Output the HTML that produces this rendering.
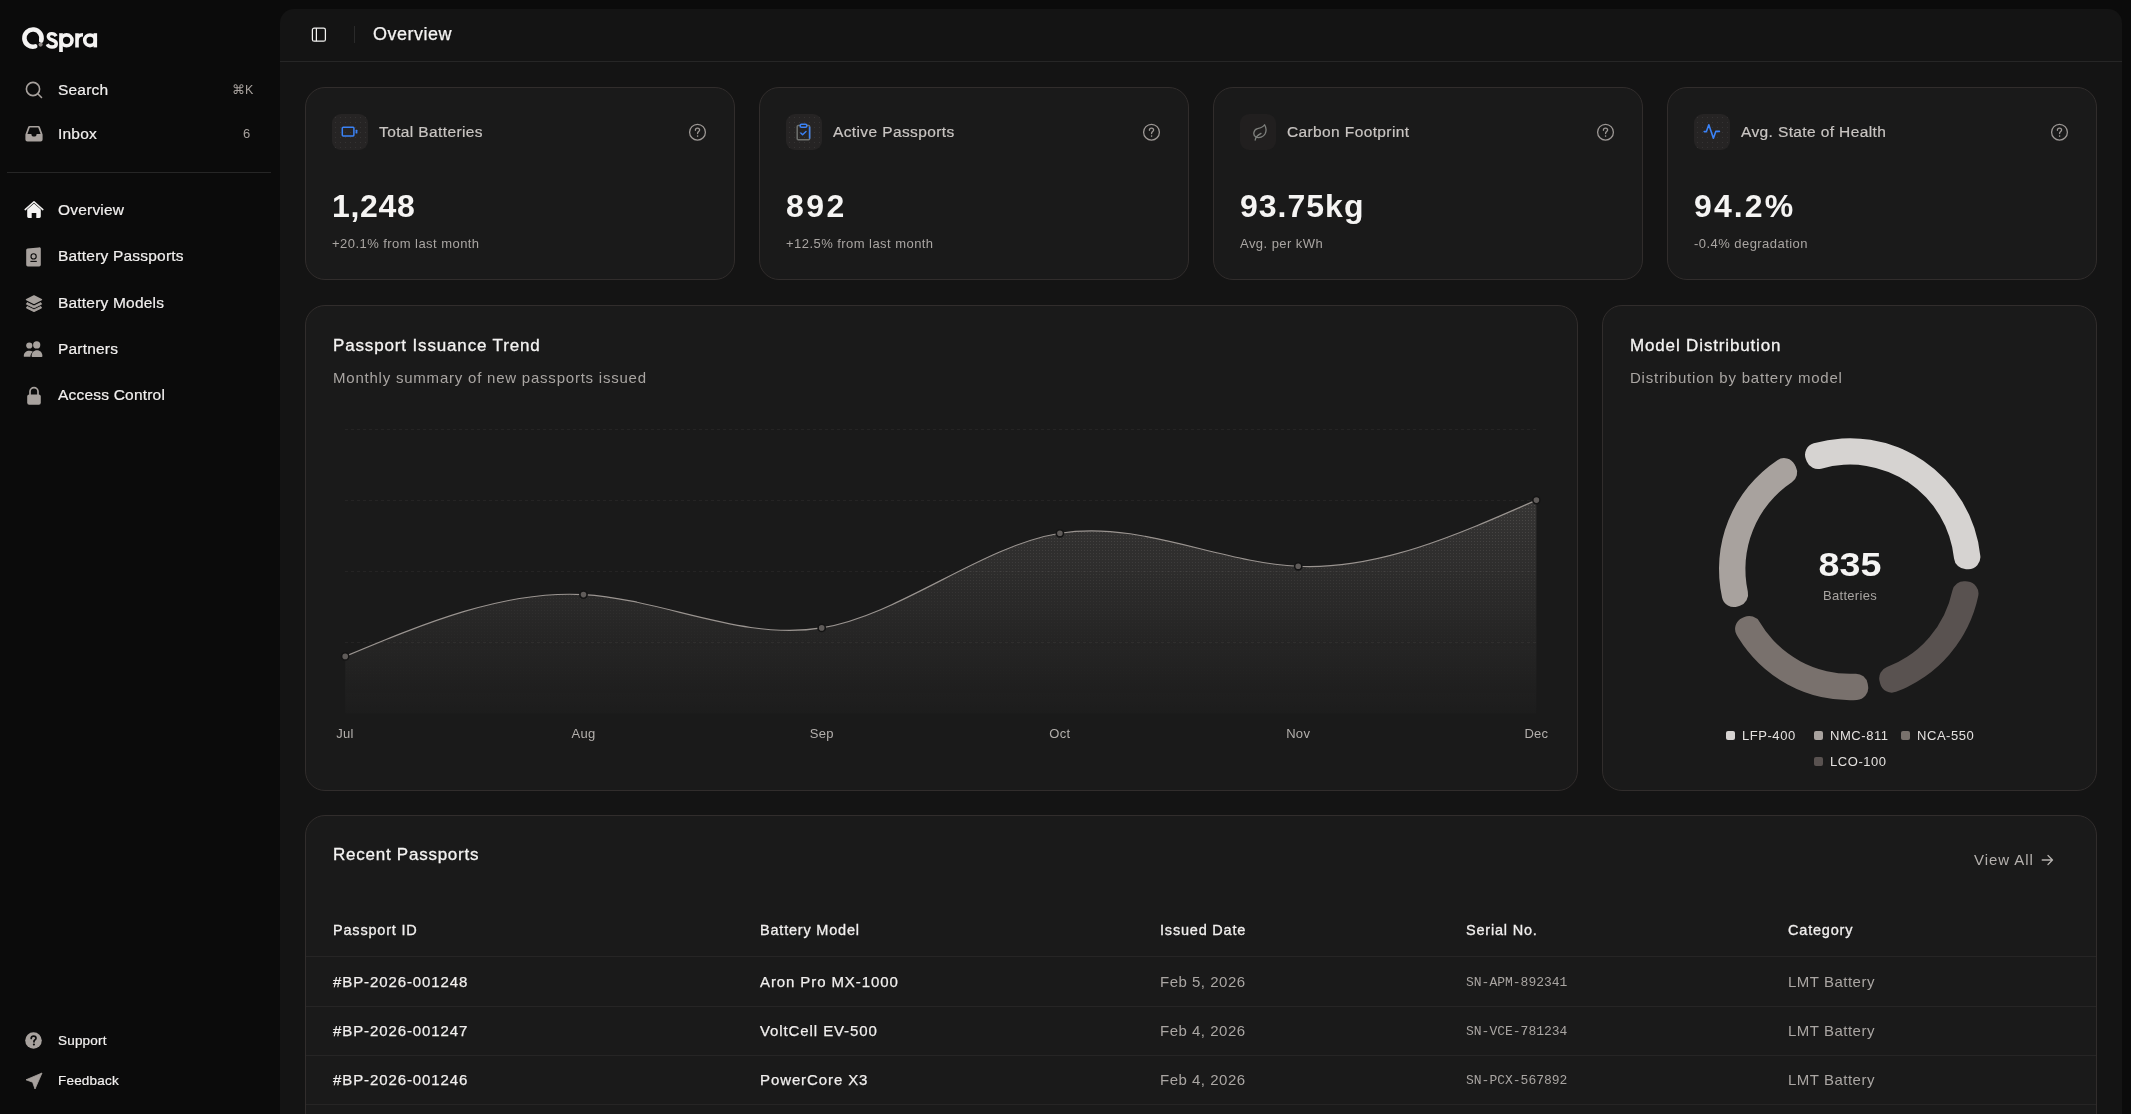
<!DOCTYPE html>
<html><head><meta charset="utf-8">
<style>
*{box-sizing:border-box;margin:0;padding:0}
html,body{width:2131px;height:1114px;overflow:hidden;background:#0b0b0b;font-family:"Liberation Sans",sans-serif;color:#f4f3f2}
.abs{position:absolute;white-space:nowrap}
#side{position:absolute;left:0;top:0;width:280px;height:1114px;background:#0b0b0b;will-change:transform}
.nav{position:absolute;left:0;width:280px;height:40px}
.nav .lbl{position:absolute;left:58px;font-size:15.5px;color:#f2f0ef;white-space:nowrap;letter-spacing:0.2px;-webkit-text-stroke:0.2px #f2f0ef}
.nav svg{position:absolute}
#main{position:absolute;left:280px;top:9px;width:1842px;height:1200px;background:#141414;border-radius:14px;will-change:transform}
#hdr{position:absolute;left:0;top:0;width:1842px;height:53px;border-bottom:1px solid #262626}
.card{position:absolute;background:#1a1a1a;border:1px solid #312d2c;border-radius:20px}
.stat .ibox{position:absolute;left:26px;top:26px;width:36px;height:36px;border-radius:9px;background:radial-gradient(circle,rgba(255,255,255,0.07) 0.7px,transparent 0.9px) 1px 1px/5px 5px,#262424}
.stat .ttl{position:absolute;left:73px;top:35px;font-size:15.5px;color:#c9c5c2;white-space:nowrap;letter-spacing:0.38px;-webkit-text-stroke:0.2px #c9c5c2}
.stat .val{position:absolute;left:26px;top:100px;font-size:32px;font-weight:bold;color:#f5f4f3;white-space:nowrap;letter-spacing:0.7px}
.stat .sub{position:absolute;left:26px;top:148px;font-size:13px;color:#a9a5a2;white-space:nowrap;letter-spacing:0.45px}
.stat .help{position:absolute;right:27.5px;top:35px}
.ctitle{font-size:17px;color:#f4f3f2;white-space:nowrap;letter-spacing:0.85px;-webkit-text-stroke:0.3px #f4f3f2}
.csub{font-size:15px;color:#a9a5a2;white-space:nowrap;letter-spacing:0.78px}
.xl{top:726px;width:80px;margin-left:-40px;text-align:center;font-size:13px;color:#b3afac;letter-spacing:0.3px}
.lg{font-size:13px;color:#e4e1df;white-space:nowrap;letter-spacing:0.55px;padding-left:16px;line-height:10px;height:10px}
.lg i{position:absolute;left:0;top:0;width:9px;height:9px;border-radius:2px}
.th{top:106px;font-size:14.5px;color:#f1efee;white-space:nowrap;letter-spacing:0.8px;-webkit-text-stroke:0.3px #f1efee}
.td1{font-size:15px;color:#f1efee;white-space:nowrap;letter-spacing:0.9px;-webkit-text-stroke:0.25px #f1efee}
.td2{font-size:15px;color:#aaa6a3;white-space:nowrap;letter-spacing:0.5px}
.td3{font-size:13px;font-family:"Liberation Mono",monospace;color:#a9a5a2;white-space:nowrap}
</style></head>
<body>
<div id="side">
  <svg class="abs" style="left:0;top:0" width="110" height="60" viewBox="0 0 110 60">
    <path d="M41.2 40.6 A8.6 8.6 0 1 0 35.2 46.4" fill="none" stroke="#f4f3f2" stroke-width="4.6" stroke-linecap="round"/>
    <circle cx="40.6" cy="44.6" r="2.1" fill="#8a8482"/>
    <path d="M56.2 36.2 C55.2 34.4 53.6 33.6 51.8 33.6 C49.4 33.6 48.3 34.9 48.3 36.6 C48.3 38.6 50.3 39.4 52.3 40 C54.6 40.7 56.3 41.5 56.3 43.7 C56.3 45.8 54.4 47 52 47 C49.9 47 48.1 46 47.2 44.2" fill="none" stroke="#f4f3f2" stroke-width="3.4"/>
    <circle cx="66.6" cy="40.3" r="5.4" fill="none" stroke="#f4f3f2" stroke-width="3.6"/>
    <path d="M61 33.2 V52" stroke="#f4f3f2" stroke-width="3.7"/>
    <path d="M77 33.2 V47.4 M77 40.5 C77 36.2 79.5 34.8 83 34.8" fill="none" stroke="#f4f3f2" stroke-width="3.6"/>
    <circle cx="90" cy="40.3" r="5.3" fill="none" stroke="#f4f3f2" stroke-width="3.6"/>
    <path d="M95.3 33.2 V47.4" stroke="#f4f3f2" stroke-width="3.6"/>
  </svg>
  <div class="nav" style="top:69px"><svg style="left:25px;top:12px" width="18" height="18" viewBox="0 0 18 18"><circle cx="8" cy="8" r="6.6" fill="none" stroke="#a8a29e" stroke-width="1.6"/><path d="M12.8 12.8 L16.5 16.5" stroke="#a8a29e" stroke-width="1.6" stroke-linecap="round"/></svg><div class="lbl" style="top:12px">Search</div><div class="abs" style="left:232px;top:13px;font-size:12.5px;color:#a8a29e">&#8984;K</div></div>
  <div class="nav" style="top:113px"><svg style="left:24px;top:12px" width="20" height="18" viewBox="0 0 20 18"><path d="M4.2 1.8 A1.6 1.6 0 0 1 5.6 1 H14.4 A1.6 1.6 0 0 1 15.8 1.8 L18.6 9.4 V14.6 A2 2 0 0 1 16.6 16.6 H3.4 A2 2 0 0 1 1.4 14.6 V9.4 Z" fill="#a8a29e"/><path d="M5.8 2.5 H14.2 L16.6 9 H12.6 A2.6 2.6 0 0 1 7.4 9 H3.4 Z" fill="#0b0b0b"/></svg><div class="lbl" style="top:12px">Inbox</div><div class="abs" style="left:243px;top:13px;font-size:13px;color:#a8a29e">6</div></div>
  <div class="abs" style="left:7px;top:172px;width:264px;height:1px;background:#262626"></div>
  <div class="nav" style="top:190px"><svg style="left:24px;top:11px" width="20" height="18" viewBox="0 0 20 18"><path d="M1.2 8.6 L10 0.8 L18.8 8.6" fill="none" stroke="#f4f3f2" stroke-width="1.5" stroke-linecap="round" stroke-linejoin="round"/><path d="M3.2 8.4 L10 2.6 L16.8 8.4 V15.6 A1.4 1.4 0 0 1 15.4 17 H12.3 V12 H7.7 V17 H4.6 A1.4 1.4 0 0 1 3.2 15.6 Z" fill="#f4f3f2"/></svg><div class="lbl" style="top:11px">Overview</div></div>
  <div class="nav" style="top:236px"><svg style="left:25px;top:11px" width="17" height="20" viewBox="0 0 17 20"><path d="M2.6 1.4 L13.6 0.4 A1.6 1.6 0 0 1 15.8 2 V17.8 A1.6 1.6 0 0 1 14.2 19.4 H2.8 A1.6 1.6 0 0 1 1.2 17.8 V3 A1.6 1.6 0 0 1 2.6 1.4 Z" fill="#a8a29e"/><circle cx="8.6" cy="9.4" r="2.6" fill="none" stroke="#0b0b0b" stroke-width="1.1"/><path d="M5.4 14.4 H11.8" stroke="#0b0b0b" stroke-width="1.1"/></svg><div class="lbl" style="top:11px">Battery Passports</div></div>
  <div class="nav" style="top:283px"><svg style="left:25px;top:12px" width="18" height="18" viewBox="0 0 18 18"><path d="M9 1 L16.4 4.6 L9 8.2 L1.6 4.6 Z" fill="#a8a29e" stroke="#a8a29e" stroke-width="1.6" stroke-linejoin="round"/><path d="M2.2 7.6 L9 10.9 L15.8 7.6 L16.6 9.2 L9 12.9 L1.4 9.2 Z" fill="#a8a29e" stroke="#a8a29e" stroke-width="0.8" stroke-linejoin="round"/><path d="M2.2 11.4 L9 14.7 L15.8 11.4 L16.6 13 L9 16.7 L1.4 13 Z" fill="#a8a29e" stroke="#a8a29e" stroke-width="0.8" stroke-linejoin="round"/></svg><div class="lbl" style="top:11px">Battery Models</div></div>
  <div class="nav" style="top:329px"><svg style="left:23px;top:12px" width="22" height="18" viewBox="0 0 22 18"><circle cx="6.3" cy="4.5" r="3.1" fill="#a8a29e"/><circle cx="13.7" cy="3.9" r="3.6" fill="#a8a29e"/><path d="M0.8 15.2 C0.8 11.6 3.2 9.7 6.4 9.7 C7.8 9.7 9 10.1 9.9 10.8 C8.4 12 7.4 13.6 7.4 15.8 H1.4 A0.6 0.6 0 0 1 0.8 15.2 Z" fill="#a8a29e"/><path d="M8.6 15.2 C8.6 11.6 10.8 9.3 14 9.3 C17.2 9.3 19.4 11.6 19.4 15.2 A0.8 0.8 0 0 1 18.6 16 H9.4 A0.8 0.8 0 0 1 8.6 15.2 Z" fill="#a8a29e"/></svg><div class="lbl" style="top:11px">Partners</div></div>
  <div class="nav" style="top:375px"><svg style="left:26px;top:11px" width="16" height="20" viewBox="0 0 16 20"><path d="M4 9 V5.6 A4 4 0 0 1 12 5.6 V9" fill="none" stroke="#a8a29e" stroke-width="1.7"/><rect x="1.2" y="8.6" width="13.6" height="10.2" rx="2" fill="#a8a29e"/></svg><div class="lbl" style="top:11px">Access Control</div></div>
  <div class="nav" style="top:1020px"><svg style="left:25px;top:12px" width="17" height="17" viewBox="0 0 17 17"><circle cx="8.5" cy="8.5" r="8.3" fill="#a8a29e"/><path d="M6.2 6.4 C6.2 5 7.2 4.1 8.6 4.1 C10 4.1 11 5 11 6.2 C11 7.6 9.4 8 9 9 V9.8" fill="none" stroke="#0b0b0b" stroke-width="1.7" stroke-linecap="round"/><circle cx="8.9" cy="12.5" r="1.1" fill="#0b0b0b"/></svg><div class="lbl" style="top:13px;font-size:13.5px">Support</div></div>
  <div class="nav" style="top:1060px"><svg style="left:25px;top:12px" width="18" height="18" viewBox="0 0 18 18"><path d="M17 1 L1 7.8 L7.6 10.2 L10 17 Z" fill="#a8a29e" stroke="#a8a29e" stroke-width="0.8" stroke-linejoin="round"/></svg><div class="lbl" style="top:13px;font-size:13.5px">Feedback</div></div>
</div>
<div id="main">
  <div id="hdr">
    <svg class="abs" style="left:31px;top:18px" width="16" height="16" viewBox="0 0 16 16"><rect x="1.4" y="1.2" width="13" height="13" rx="1.8" fill="none" stroke="#f4f3f2" stroke-width="1.25"/><path d="M5.4 1.2 V14.2" stroke="#f4f3f2" stroke-width="1.25"/></svg>
    <div class="abs" style="left:74px;top:17px;width:1px;height:17px;background:#2a2a2a"></div>
    <div class="abs" style="left:93px;top:15px;font-size:18px;color:#f4f3f2;letter-spacing:0.5px;-webkit-text-stroke:0.25px #f4f3f2">Overview</div>
  </div>
  <div class="card stat" style="left:25px;top:78px;width:430px;height:193px">
    <div class="ibox" style=""><svg class="abs" style="left:9px;top:12px" width="18" height="12" viewBox="0 0 18 12"><rect x="1.3" y="1.3" width="11.6" height="8.6" rx="0.8" fill="none" stroke="#3b82f6" stroke-width="1.5"/><rect x="14.6" y="3.8" width="1.8" height="3.6" rx="0.5" fill="#3b82f6"/></svg></div><div class="ttl">Total Batteries</div><svg class="help" width="19" height="19" viewBox="0 0 19 19"><circle cx="9.5" cy="9.2" r="7.9" fill="none" stroke="#9c9794" stroke-width="1.3"/><path d="M7.4 7.3 C7.4 6 8.3 5.2 9.5 5.2 C10.7 5.2 11.6 6 11.6 7.1 C11.6 8.5 9.6 8.7 9.6 10.3 V10.6" fill="none" stroke="#9c9794" stroke-width="1.3" stroke-linecap="round"/><circle cx="9.6" cy="13.1" r="0.8" fill="#9c9794"/></svg>
    <div class="val" style="letter-spacing:0.7px">1,248</div><div class="sub">+20.1% from last month</div>
  </div>
  <div class="card stat" style="left:479px;top:78px;width:430px;height:193px">
    <div class="ibox" style=""><svg class="abs" style="left:10px;top:9px" width="16" height="18" viewBox="0 0 16 18"><path d="M4 2.6 H2.2 A1 1 0 0 0 1.2 3.6 V15.8 A1 1 0 0 0 2.2 16.8 H12.6 A1 1 0 0 0 13.6 15.8 V3.6 A1 1 0 0 0 12.6 2.6 H11" fill="none" stroke="#6f716e" stroke-width="1.5"/><path d="M13.6 3.8 V15.6" stroke="#3b82f6" stroke-width="1.5"/><rect x="4.2" y="1.2" width="6.6" height="3" rx="1.2" fill="none" stroke="#3b82f6" stroke-width="1.5"/><path d="M4.8 10 L6.6 11.8 L10 8.6" fill="none" stroke="#3b82f6" stroke-width="1.4" stroke-linecap="round" stroke-linejoin="round"/></svg></div><div class="ttl">Active Passports</div><svg class="help" width="19" height="19" viewBox="0 0 19 19"><circle cx="9.5" cy="9.2" r="7.9" fill="none" stroke="#9c9794" stroke-width="1.3"/><path d="M7.4 7.3 C7.4 6 8.3 5.2 9.5 5.2 C10.7 5.2 11.6 6 11.6 7.1 C11.6 8.5 9.6 8.7 9.6 10.3 V10.6" fill="none" stroke="#9c9794" stroke-width="1.3" stroke-linecap="round"/><circle cx="9.6" cy="13.1" r="0.8" fill="#9c9794"/></svg>
    <div class="val" style="letter-spacing:2.5px">892</div><div class="sub">+12.5% from last month</div>
  </div>
  <div class="card stat" style="left:933px;top:78px;width:430px;height:193px">
    <div class="ibox" style="background:#211f1f"><svg class="abs" style="left:10px;top:9px" width="18" height="18" viewBox="0 0 18 18"><path d="M6 14 C2.6 12.6 3.2 6.6 7.6 5.6 C10 5 13 4.6 14.6 1.8 C16.2 4.6 16.4 8.4 15 11 C13.4 13.8 9.4 15.4 6 14 Z" fill="none" stroke="#7e807d" stroke-width="1.3" stroke-linejoin="round"/><path d="M5.2 17 C5.6 14 8 12 11 10.4" fill="none" stroke="#7e807d" stroke-width="1.3" stroke-linecap="round"/></svg></div><div class="ttl">Carbon Footprint</div><svg class="help" width="19" height="19" viewBox="0 0 19 19"><circle cx="9.5" cy="9.2" r="7.9" fill="none" stroke="#9c9794" stroke-width="1.3"/><path d="M7.4 7.3 C7.4 6 8.3 5.2 9.5 5.2 C10.7 5.2 11.6 6 11.6 7.1 C11.6 8.5 9.6 8.7 9.6 10.3 V10.6" fill="none" stroke="#9c9794" stroke-width="1.3" stroke-linecap="round"/><circle cx="9.6" cy="13.1" r="0.8" fill="#9c9794"/></svg>
    <div class="val" style="letter-spacing:1.0px">93.75kg</div><div class="sub">Avg. per kWh</div>
  </div>
  <div class="card stat" style="left:1387px;top:78px;width:430px;height:193px">
    <div class="ibox" style=""><svg class="abs" style="left:9px;top:9px" width="18" height="18" viewBox="0 0 18 18"><path d="M1.2 8.6 H3.4 L5.8 1.8 L10.4 15.2 L12.8 8.4 H16.4" fill="none" stroke="#3b82f6" stroke-width="1.6" stroke-linecap="round" stroke-linejoin="round"/></svg></div><div class="ttl">Avg. State of Health</div><svg class="help" width="19" height="19" viewBox="0 0 19 19"><circle cx="9.5" cy="9.2" r="7.9" fill="none" stroke="#9c9794" stroke-width="1.3"/><path d="M7.4 7.3 C7.4 6 8.3 5.2 9.5 5.2 C10.7 5.2 11.6 6 11.6 7.1 C11.6 8.5 9.6 8.7 9.6 10.3 V10.6" fill="none" stroke="#9c9794" stroke-width="1.3" stroke-linecap="round"/><circle cx="9.6" cy="13.1" r="0.8" fill="#9c9794"/></svg>
    <div class="val" style="letter-spacing:2.1px">94.2%</div><div class="sub">-0.4% degradation</div>
  </div>
  <div class="card" style="left:25px;top:296px;width:1273px;height:486px">
    <div class="abs ctitle" style="left:27px;top:30px">Passport Issuance Trend</div>
    <div class="abs csub" style="left:27px;top:63px">Monthly summary of new passports issued</div>
  </div>
  <div class="card" style="left:1322px;top:296px;width:495px;height:486px">
    <div class="abs ctitle" style="left:27px;top:30px">Model Distribution</div>
    <div class="abs csub" style="left:27px;top:63px">Distribution by battery model</div>
  </div>
  <div class="card" style="left:25px;top:806px;width:1792px;height:400px">
    <div class="abs ctitle" style="left:27px;top:29px;letter-spacing:0.75px">Recent Passports</div>
    <div class="abs" style="left:1668px;top:35px;font-size:15px;color:#b5b1ae;letter-spacing:0.95px">View All</div>
    <svg class="abs" style="left:1735px;top:38px" width="13" height="12" viewBox="0 0 13 12"><path d="M1.2 6 H11.5 M7 1.5 L11.5 6 L7 10.5" fill="none" stroke="#b5b1ae" stroke-width="1.3" stroke-linecap="round" stroke-linejoin="round"/></svg>
    <div class="abs th" style="left:27px">Passport ID</div>
    <div class="abs th" style="left:454px">Battery Model</div>
    <div class="abs th" style="left:854px">Issued Date</div>
    <div class="abs th" style="left:1160px">Serial No.</div>
    <div class="abs th" style="left:1482px">Category</div>
    <div class="abs" style="left:0;top:140px;width:1790px;height:1px;background:#262525"></div>
    <div class="abs" style="left:0;top:190px;width:1790px;height:1px;background:#262525"></div>
    <div class="abs td1" style="left:27px;top:157px">#BP-2026-001248</div>
    <div class="abs td1" style="left:454px;top:157px">Aron Pro MX-1000</div>
    <div class="abs td2" style="left:854px;top:157px">Feb 5, 2026</div>
    <div class="abs td3" style="left:1160px;top:159px">SN-APM-892341</div>
    <div class="abs td2" style="left:1482px;top:157px">LMT Battery</div>
    <div class="abs" style="left:0;top:239px;width:1790px;height:1px;background:#262525"></div>
    <div class="abs td1" style="left:27px;top:206px">#BP-2026-001247</div>
    <div class="abs td1" style="left:454px;top:206px">VoltCell EV-500</div>
    <div class="abs td2" style="left:854px;top:206px">Feb 4, 2026</div>
    <div class="abs td3" style="left:1160px;top:208px">SN-VCE-781234</div>
    <div class="abs td2" style="left:1482px;top:206px">LMT Battery</div>
    <div class="abs" style="left:0;top:288px;width:1790px;height:1px;background:#262525"></div>
    <div class="abs td1" style="left:27px;top:255px">#BP-2026-001246</div>
    <div class="abs td1" style="left:454px;top:255px">PowerCore X3</div>
    <div class="abs td2" style="left:854px;top:255px">Feb 4, 2026</div>
    <div class="abs td3" style="left:1160px;top:257px">SN-PCX-567892</div>
    <div class="abs td2" style="left:1482px;top:255px">LMT Battery</div>
    <div class="abs" style="left:0;top:337px;width:1790px;height:1px;background:#262525"></div>
    <div class="abs td1" style="left:27px;top:304px">#BP-2026-001245</div>
    <div class="abs td1" style="left:454px;top:304px">Aron Pro MX-1000</div>
    <div class="abs td2" style="left:854px;top:304px">Feb 3, 2026</div>
    <div class="abs td3" style="left:1160px;top:306px">SN-APM-892340</div>
    <div class="abs td2" style="left:1482px;top:304px">LMT Battery</div>
  </div>
</div>
<svg class="abs" style="left:0;top:0;z-index:5;pointer-events:none" width="2131" height="1114" viewBox="0 0 2131 1114">
<defs><linearGradient id="ag" x1="0" y1="0" x2="0" y2="1"><stop offset="0" stop-color="#a8a29e" stop-opacity="0.2"/><stop offset="1" stop-color="#a8a29e" stop-opacity="0.02"/></linearGradient><linearGradient id="mg" x1="0" y1="0" x2="0" y2="1"><stop offset="0" stop-color="#fff" stop-opacity="1"/><stop offset="0.6" stop-color="#fff" stop-opacity="0.15"/><stop offset="1" stop-color="#fff" stop-opacity="0"/></linearGradient><pattern id="dp" width="3" height="3" patternUnits="userSpaceOnUse"><rect x="1" y="1" width="1" height="1" fill="#a8a29e" fill-opacity="0.22"/></pattern><mask id="mk"><rect x="340" y="495" width="1200" height="220" fill="url(#mg)"/></mask></defs>
<g stroke="#252424" stroke-width="1" stroke-dasharray="3 3">
<path d="M345 429.5H1537"/><path d="M345 500.5H1537"/><path d="M345 571.5H1537"/><path d="M345 642.5H1537"/>
</g>
<path d="M345.20,656.40C424.64,623.27,504.08,590.15,583.50,594.60C662.92,599.05,742.31,641.08,821.70,627.90C901.09,614.72,980.48,546.33,1059.90,533.30C1139.32,520.27,1218.78,562.61,1298.20,566.30C1377.62,569.99,1457.01,535.05,1536.40,500.10L1536.40,713.6L345.20,713.6Z" fill="url(#ag)"/>
<path d="M345.20,656.40C424.64,623.27,504.08,590.15,583.50,594.60C662.92,599.05,742.31,641.08,821.70,627.90C901.09,614.72,980.48,546.33,1059.90,533.30C1139.32,520.27,1218.78,562.61,1298.20,566.30C1377.62,569.99,1457.01,535.05,1536.40,500.10L1536.40,713.6L345.20,713.6Z" fill="url(#dp)" mask="url(#mk)"/>
<path d="M345.20,656.40C424.64,623.27,504.08,590.15,583.50,594.60C662.92,599.05,742.31,641.08,821.70,627.90C901.09,614.72,980.48,546.33,1059.90,533.30C1139.32,520.27,1218.78,562.61,1298.20,566.30C1377.62,569.99,1457.01,535.05,1536.40,500.10" fill="none" stroke="#9a9490" stroke-width="1.15"/>
<circle cx="345.2" cy="656.4" r="3.6" fill="#5f5b59" stroke="#141414" stroke-width="1.6"/><circle cx="583.5" cy="594.6" r="3.6" fill="#5f5b59" stroke="#141414" stroke-width="1.6"/><circle cx="821.7" cy="627.9" r="3.6" fill="#5f5b59" stroke="#141414" stroke-width="1.6"/><circle cx="1059.9" cy="533.3" r="3.6" fill="#5f5b59" stroke="#141414" stroke-width="1.6"/><circle cx="1298.2" cy="566.3" r="3.6" fill="#5f5b59" stroke="#141414" stroke-width="1.6"/><circle cx="1536.4" cy="500.1" r="3.6" fill="#5f5b59" stroke="#141414" stroke-width="1.6"/>
<path d="M1968.39,569.20A12,12 0 0 0 1980.33,555.99A131,131 0 0 0 1813.72,443.32A12,12 0 0 0 1805.91,459.32L1806.80,461.56A12,12 0 0 0 1821.24,468.63A104.6,104.6 0 0 1 1954.04,558.43A12,12 0 0 0 1965.98,569.20Z" fill="#d6d3d1"/>
<path d="M1794.66,464.53A12,12 0 0 0 1777.40,460.15A131,131 0 0 0 1722.13,597.68A12,12 0 0 0 1737.62,606.46L1739.91,605.70A12,12 0 0 0 1747.85,591.73A104.6,104.6 0 0 1 1791.85,482.25A12,12 0 0 0 1795.79,466.67Z" fill="#a8a29e"/>
<path d="M1742.13,618.01A12,12 0 0 0 1736.70,634.96A131,131 0 0 0 1856.86,700.02A12,12 0 0 0 1868.09,686.20L1867.72,683.82A12,12 0 0 0 1855.26,673.67A104.6,104.6 0 0 1 1759.64,621.90A12,12 0 0 0 1744.33,617.01Z" fill="#79716d"/>
<path d="M1880.22,683.67A12,12 0 0 0 1896.04,691.84A131,131 0 0 0 1978.24,595.96A12,12 0 0 0 1967.74,581.58L1965.35,581.32A12,12 0 0 0 1952.35,590.78A104.6,104.6 0 0 1 1886.97,667.05A12,12 0 0 0 1879.60,681.34Z" fill="#595250"/>
</svg>
<div class="abs" style="left:0;top:0;width:2131px;height:1114px;z-index:6;pointer-events:none;will-change:transform">
  <div class="abs xl" style="left:345px">Jul</div>
  <div class="abs xl" style="left:583.5px">Aug</div>
  <div class="abs xl" style="left:821.7px">Sep</div>
  <div class="abs xl" style="left:1059.9px">Oct</div>
  <div class="abs xl" style="left:1298.2px">Nov</div>
  <div class="abs xl" style="left:1536.4px">Dec</div>
  <div class="abs" style="left:1750px;width:200px;top:546px;text-align:center;font-size:33px;font-weight:bold;color:#f5f4f3;transform:scaleX(1.14)">835</div>
  <div class="abs" style="left:1750px;width:200px;top:588px;text-align:center;font-size:13px;color:#a9a5a2;letter-spacing:0.3px">Batteries</div>
  <div class="abs lg" style="left:1726px;top:731px"><i style="background:#d6d3d1"></i>LFP-400</div>
  <div class="abs lg" style="left:1814px;top:731px"><i style="background:#a8a29e"></i>NMC-811</div>
  <div class="abs lg" style="left:1901px;top:731px"><i style="background:#78716c"></i>NCA-550</div>
  <div class="abs lg" style="left:1814px;top:757px"><i style="background:#595250"></i>LCO-100</div>
</div>
</body></html>
